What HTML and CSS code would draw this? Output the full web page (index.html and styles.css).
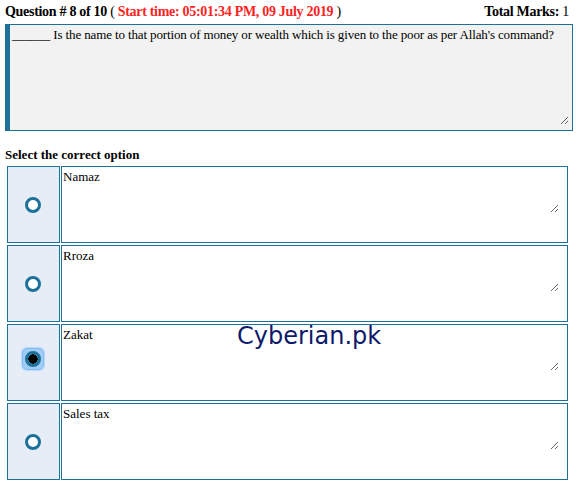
FILE: index.html
```html
<!DOCTYPE html>
<html lang="en">
<head>
  <meta charset="UTF-8">
  <title>Quiz</title>
  <link rel="stylesheet" href="styles.css">
</head>
<body>
  <div class="header">
    <div class="title">
      <b>Question # 8 of 10</b> ( <b class="time">Start time: 05:01:34 PM, 09 July 2019</b> )
    </div>
    <div class="marks"><b>Total Marks:</b> 1</div>
  </div>

  <div class="question">
    <textarea readonly>______ Is the name to that portion of money or wealth which is given to the poor as per Allah's command?</textarea>
  </div>

  <h4 class="select-label">Select the correct option</h4>

  <div class="options">
    <div class="option">
      <label class="pick"><input type="radio" name="answer"></label>
      <div class="answer"><textarea readonly>Namaz</textarea></div>
    </div>
    <div class="option">
      <label class="pick"><input type="radio" name="answer"></label>
      <div class="answer"><textarea readonly>Rroza</textarea></div>
    </div>
    <div class="option">
      <label class="pick"><span class="focus"><input type="radio" name="answer" checked></span></label>
      <div class="answer"><textarea readonly>Zakat</textarea></div>
    </div>
    <div class="option">
      <label class="pick"><input type="radio" name="answer"></label>
      <div class="answer"><textarea readonly>Sales tax</textarea></div>
    </div>
  </div>

  <div class="watermark">Cyberian.pk</div>
</body>
</html>
```

FILE: styles.css
```css
body {
  font-family: "Liberation Serif", "Times New Roman", serif;
  font-size: 13px;
  color: #000;
  background: #fff;
  margin: 0;
  padding: 0;
  position: relative;
}

textarea {
  font-family: "Liberation Serif", "Times New Roman", serif;
  font-size: 13px;
  color: #000;
  border: none;
  outline: none;
  background: transparent;
  margin: 0;
  box-sizing: border-box;
}

.header {
  display: flex;
  justify-content: space-between;
  align-items: center;
  padding: 3px 9px 0 5px;
  height: 18px;
  font-size: 14px;
  letter-spacing: -0.3px;
}

.time {
  color: #ff2222;
}

.question {
  box-sizing: border-box;
  margin: 3px 0 0 5px;
  width: 568px;
  height: 107px;
  padding: 1px 3px 5px 1px;
  border: 1px solid #1d7199;
  border-left: 5px solid #1d7199;
  background: #f2f2f2;
}

.question textarea {
  display: block;
  width: 100%;
  height: 100%;
  padding: 1px;
  letter-spacing: -0.13px;
}

.select-label {
  margin: 16px 0 0 5px;
  font-size: 13px;
  height: 17px;
}

.options {
  display: flex;
  flex-direction: column;
  gap: 2px;
  padding: 2px 0 0 7px;
}

.option {
  display: grid;
  grid-template-columns: 53px 507px;
  gap: 1px;
  height: 77px;
}

.pick {
  box-sizing: border-box;
  border: 1px solid #1d7199;
  background: #e6edf7;
  display: flex;
  align-items: center;
  justify-content: center;
  padding-right: 1px;
}

.pick input {
  appearance: none;
  margin: 0;
  width: 16px;
  height: 16px;
  box-sizing: border-box;
  border: 3.5px solid #1d7199;
  border-radius: 50%;
  background: #fff;
}

.pick input:checked {
  background: radial-gradient(circle, #000 0 4.5px, transparent 5px);
}

.focus {
  display: flex;
  align-items: center;
  justify-content: center;
  width: 20px;
  height: 20px;
  margin-top: -7px;
  border-radius: 4px;
  background: #9fcdf8;
  box-shadow: 0 0 2px 1px #5fa8f0;
}

.answer {
  box-sizing: border-box;
  height: 77px;
  padding: 1px 8px 0 0;
  border: 1px solid #1d7199;
  background: #fff;
}

.answer textarea {
  display: block;
  width: 100%;
  height: 45px;
  padding: 1px;
}

.watermark {
  position: absolute;
  left: 237px;
  top: 322px;
  font-family: "DejaVu Sans", Verdana, sans-serif;
  font-size: 24px;
  color: #0d1a6b;
}
```
